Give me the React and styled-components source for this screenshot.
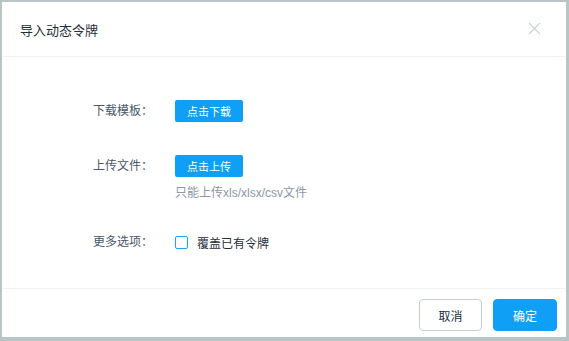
import React from "react";
import styled, { createGlobalStyle } from "styled-components";

const GlobalStyle = createGlobalStyle`
	html, body {
		margin: 0;
		padding: 0;
		background: #b9c4c6;
	}
	body {
		font-family: "Liberation Sans", "Noto Sans CJK SC", sans-serif;
	}
`;

const Frame = styled.div`
	width: 569px;
	height: 341px;
	box-sizing: border-box;
	padding: 2px 3px 4px 2px;
`;

const Dialog = styled.div`
	width: 100%;
	height: 100%;
	background: #fff;
	display: flex;
	flex-direction: column;
`;

const Header = styled.div`
	height: 54px;
	display: flex;
	align-items: center;
	justify-content: space-between;
	padding: 0 24px 0 18px;
	border-bottom: 1px solid #eef1f4;
	h3 {
		margin: 0;
		font-size: 13px;
		font-weight: 400;
		color: #1f2d3d;
	}
`;

const Close = styled.button`
	width: 14px;
	height: 14px;
	padding: 0;
	border: none;
	background: none;
	display: flex;
	svg {
		display: block;
	}
`;

const Body = styled.div`
	flex: 1;
	padding: 43px 0 0 91px;
`;

const Row = styled.div`
	display: flex;
	align-items: flex-start;
	margin-bottom: ${(p) => p.gap || 0}px;
`;

const Label = styled.div`
	width: 82px;
	line-height: 22px;
	font-size: 12px;
	color: #48576a;
	flex-shrink: 0;
`;

const Content = styled.div`
	display: flex;
	flex-direction: column;
`;

const SmallButton = styled.button`
	width: 68px;
	height: 22px;
	border: none;
	border-radius: 2px;
	background: #0fa0f6;
	color: #fff;
	font-family: inherit;
	font-size: 11px;
	padding: 0;
`;

const Hint = styled.div`
	margin-top: 8px;
	font-size: 12px;
	line-height: 16px;
	color: #8a97a8;
`;

const Check = styled.label`
	display: flex;
	align-items: center;
	gap: 9px;
	height: 22px;
	font-size: 12px;
	color: #1f2d3d;
`;

const Box = styled.span`
	display: block;
	width: 13px;
	height: 13px;
	box-sizing: border-box;
	border: 1px solid #20a0ff;
	border-radius: 2px;
	background: #fff;
`;

const Footer = styled.div`
	border-top: 1px solid #eef1f4;
	display: flex;
	justify-content: flex-end;
	gap: 11px;
	padding: 10px 9px 0 0;
	height: 38px;
`;

const FootButton = styled.button`
	width: ${(p) => (p.$primary ? 64 : 63)}px;
	height: 32px;
	border-radius: 4px;
	font-family: inherit;
	font-size: 12px;
	padding: 0;
	border: 1px solid ${(p) => (p.$primary ? "#0fa0f6" : "#c4cdd6")};
	background: ${(p) => (p.$primary ? "#0fa0f6" : "#fff")};
	color: ${(p) => (p.$primary ? "#fff" : "#1f2d3d")};
`;

const App = () => {
	return (
		<Frame>
			<GlobalStyle />
			<Dialog>
				<Header>
					<h3>导入动态令牌</h3>
					<Close aria-label="close">
						<svg width="13" height="13" viewBox="0 0 13 13">
							<path d="M1 1L12 12M12 1L1 12" stroke="#c8d1db" strokeWidth="1.1" />
						</svg>
					</Close>
				</Header>
				<Body>
					<Row gap={33}>
						<Label>下载模板：</Label>
						<Content>
							<SmallButton>点击下载</SmallButton>
						</Content>
					</Row>
					<Row gap={30}>
						<Label>上传文件：</Label>
						<Content>
							<SmallButton>点击上传</SmallButton>
							<Hint>只能上传xls/xlsx/csv文件</Hint>
						</Content>
					</Row>
					<Row>
						<Label>更多选项：</Label>
						<Content>
							<Check>
								<Box />
								覆盖已有令牌
							</Check>
						</Content>
					</Row>
				</Body>
				<Footer>
					<FootButton>取消</FootButton>
					<FootButton $primary>确定</FootButton>
				</Footer>
			</Dialog>
		</Frame>
	);
};

export default App;
